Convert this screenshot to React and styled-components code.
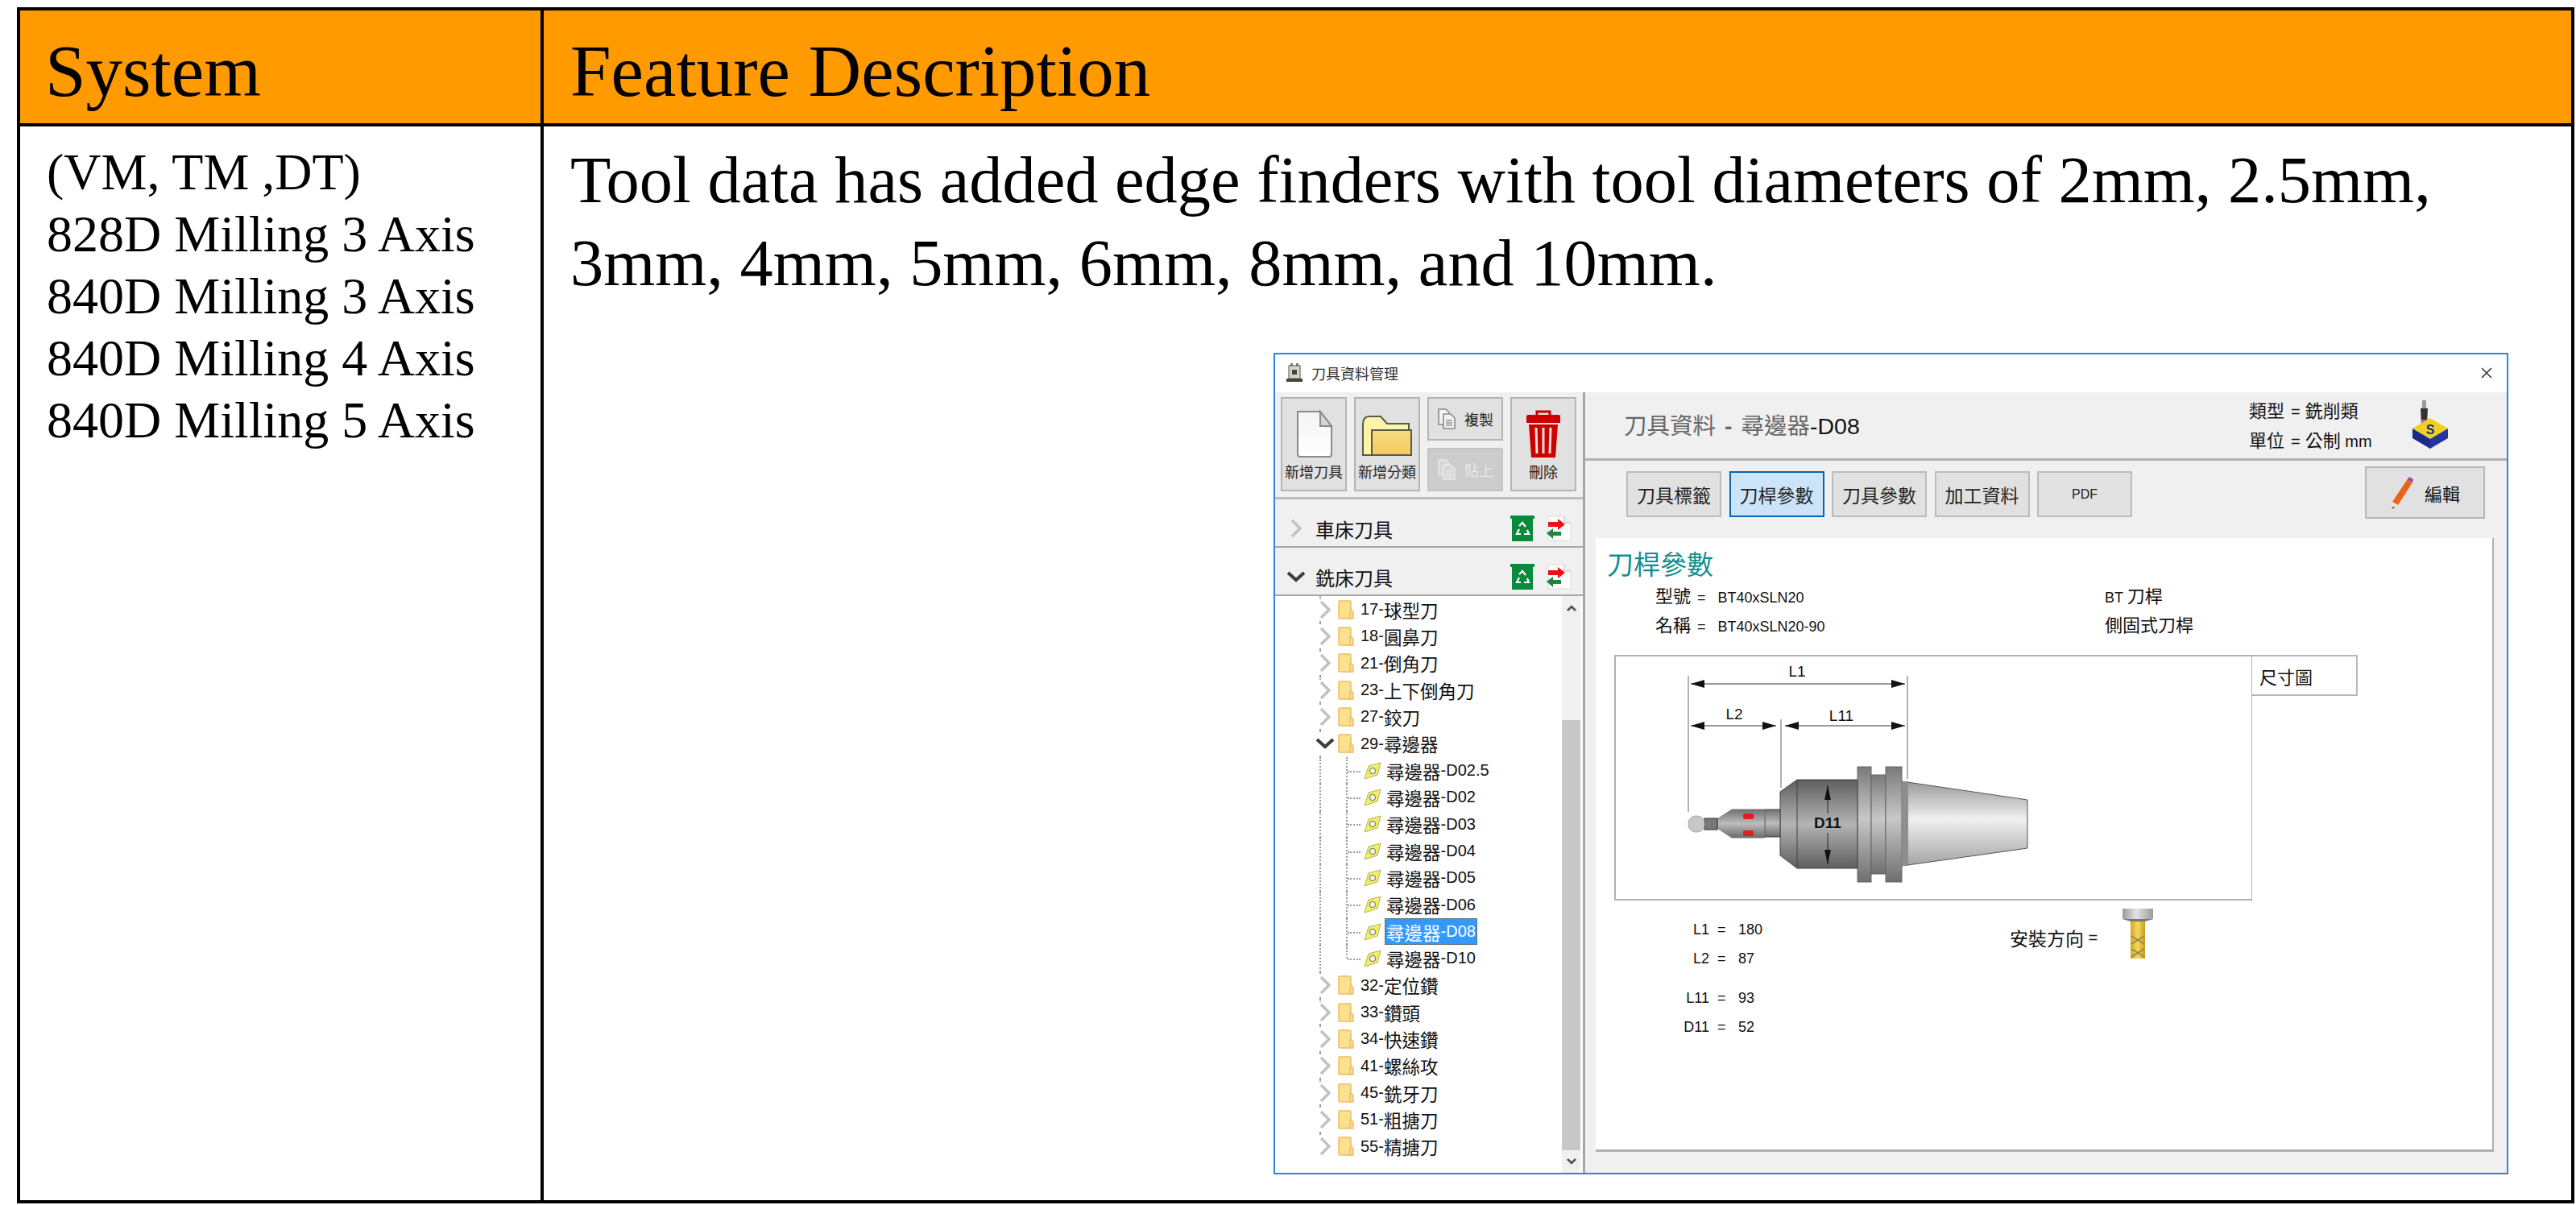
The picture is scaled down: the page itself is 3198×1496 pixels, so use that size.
import React from "react";
import styled, { createGlobalStyle } from "styled-components";

const Global = createGlobalStyle`
  html, body { margin: 0; padding: 0; background: #fff; }
  * { box-sizing: border-box; }
`;

const UI_FONT = `"Liberation Sans", "Noto Sans CJK TC", sans-serif`;
const CJK_FONT = `"Noto Sans CJK TC", sans-serif`;

const Sheet = styled.div`
  display: grid;
  grid-template-columns: 650px 1fr;
  grid-template-rows: 144px 1fr;
  width: 3175px;
  height: 1485px;
  margin: 9px 0 0 21px;
  border: 4px solid #000;
  font-family: "Liberation Serif", serif;
  color: #000;
`;
const HeadCell = styled.div`
  display: flex;
  align-items: center;
  background: #ff9a00;
  border-bottom: 4px solid #000;
  border-right: ${(p) => (p.$first ? "4px solid #000" : "none")};
  padding: 10px 0 0 ${(p) => (p.$first ? "31px" : "33px")};
  font-size: 91px;
  line-height: 1;
`;
const SystemCell = styled.div`
  border-right: 4px solid #000;
  padding: 18px 0 0 33px;
  font-size: 64px;
  line-height: 77px;
`;
const FeatureCell = styled.div`
  display: flex;
  flex-direction: column;
  padding: 15px 78px 32px 33px;
  min-height: 0;
`;
const FeatureText = styled.p`
  margin: 0;
  font-size: 82.4px;
  line-height: 103px;
`;

const Win = styled.div`
  display: flex;
  flex-direction: column;
  width: 1533px;
  height: 1020px;
  margin-top: auto;
  align-self: flex-end;
  border: 2px solid #2b88d8;
  background: #fff;
  font-family: ${UI_FONT};
  color: #111;
`;
const TitleBar = styled.div`
  display: flex;
  align-items: center;
  flex: none;
  height: 47px;
  padding: 0 17px 2px 14px;
  gap: 11px;
  font-family: ${CJK_FONT};
  font-size: 18px;
  color: #333;
`;
const CloseBox = styled.span`
  display: flex;
  margin-left: auto;
`;
const WinBody = styled.div`
  display: flex;
  flex: 1;
  min-height: 0;
`;
const LeftPane = styled.div`
  display: flex;
  flex-direction: column;
  flex: none;
  width: 385px;
  border-right: 3px solid #a6a6a6;
`;
const Toolbar = styled.div`
  display: grid;
  flex: none;
  grid-template-columns: 82px 82px 94px 82px;
  grid-template-rows: 54px 54px;
  gap: 9px;
  height: 133px;
  padding: 6px 7px 7px;
  background: #f0f0f0;
  border-bottom: 3px solid #bdbdbd;
`;
const ToolBtn = styled.div`
  display: flex;
  flex-direction: ${(p) => (p.$tall ? "column" : "row")};
  grid-row: ${(p) => (p.$tall ? "span 2" : "auto")};
  align-items: center;
  justify-content: ${(p) => (p.$tall ? "flex-end" : "center")};
  gap: ${(p) => (p.$tall ? "4px" : "10px")};
  padding-bottom: ${(p) => (p.$tall ? "11px" : "0")};
  background: ${(p) => (p.$off ? "#cccccc" : "#e1e1e1")};
  border: 2px solid ${(p) => (p.$off ? "#c4c4c4" : "#b4b4b4")};
  font-family: ${CJK_FONT};
  font-size: 18px;
  line-height: 24px;
  color: ${(p) => (p.$off ? "#e8e8e8" : "#222")};
  white-space: nowrap;
`;
const Section = styled.div`
  display: flex;
  align-items: center;
  flex: none;
  height: 60px;
  padding: 14px 14px 0 14px;
  background: #f0f0f0;
  border-bottom: 2px solid #a8a8a8;
  font-family: ${CJK_FONT};
  font-size: 24px;
`;
const SectionChevron = styled.span`
  display: flex;
  justify-content: center;
  width: 24px;
  margin: 0 12px 0 0;
`;
const SectionIcons = styled.span`
  display: flex;
  align-items: center;
  gap: 14px;
  margin-left: auto;
`;
const TreeWrap = styled.div`
  display: flex;
  flex: 1;
  min-height: 0;
  padding-right: 3px;
`;
const TreeList = styled.div`
  flex: 1;
`;
const Row = styled.div`
  position: relative;
  display: flex;
  align-items: center;
  height: 33.33px;
  padding-left: ${(p) => (p.$child ? "110px" : "49px")};
  font-size: 20px;
  white-space: nowrap;
  &::before {
    content: "";
    position: absolute;
    left: 55px;
    top: 0;
    bottom: ${(p) => (p.$end ? "50%" : "0")};
    border-left: 2px dotted #9a9a9a;
  }
`;
const ChildGuide = styled.span`
  position: absolute;
  left: 88px;
  top: 0;
  bottom: ${(p) => (p.$end ? "50%" : "0")};
  width: 18px;
  border-left: 2px dotted #9a9a9a;
  &::after {
    content: "";
    position: absolute;
    left: 0;
    top: ${(p) => (p.$end ? "100%" : "50%")};
    width: 16px;
    border-top: 2px dotted #9a9a9a;
  }
`;
const RowChevron = styled.span`
  position: relative;
  display: flex;
  justify-content: center;
  width: 26px;
  height: 26px;
  margin-right: 3px;
  background: #fff;
  align-items: center;
`;
const FolderBox = styled.span`
  display: flex;
  margin-right: 6px;
`;
const LeafBox = styled.span`
  position: relative;
  display: flex;
  margin-right: 4px;
`;
const Label = styled.span`
  display: inline-flex;
  align-items: center;
  height: 33px;
  padding: 0 1px;
  border: 1px ${(p) => (p.$sel ? "dotted #8a4b00" : "solid transparent")};
  background: ${(p) => (p.$sel ? "#3399ff" : "transparent")};
  color: ${(p) => (p.$sel ? "#fff" : "#111")};
`;
const Cjk = styled.span`
  font-family: ${CJK_FONT};
  font-size: ${(p) => p.$size || 22}px;
`;
const Scrollbar = styled.div`
  display: flex;
  flex-direction: column;
  flex: none;
  width: 23px;
  background: #f0f0f0;
`;
const ScrollArrow = styled.span`
  display: flex;
  align-items: center;
  justify-content: center;
  flex: none;
  height: 28px;
`;
const ScrollGap = styled.span`
  flex: none;
  height: 126px;
`;
const ScrollThumb = styled.span`
  flex: 1;
  background: #c8c8c8;
`;

const RightPane = styled.div`
  display: flex;
  flex-direction: column;
  flex: 1;
  min-width: 0;
  background: #f0f0f0;
`;
const HeaderBand = styled.div`
  display: flex;
  align-items: center;
  flex: none;
  height: 85px;
  padding: 0 70px 3px 48px;
  border-bottom: 3px solid #b0b0b0;
`;
const PageTitle = styled.div`
  font-family: ${CJK_FONT};
  font-size: 28.5px;
  color: #666;
  white-space: nowrap;
`;
const TitleSep = styled.span`
  margin: 0 11px;
  font-family: "Liberation Sans", sans-serif;
  font-weight: 700;
`;
const PageTitleStrong = styled.span`
  font-family: "Liberation Sans", sans-serif;
  color: #111;
`;
const UnitInfo = styled.div`
  display: grid;
  grid-auto-rows: 37px;
  align-items: center;
  margin-left: auto;
  margin-right: 48px;
  width: 152px;
  font-size: 20px;
  white-space: nowrap;
`;
const Eq = styled.span`
  margin: ${(p) => (p.$wide ? "0 15px 0 8px" : "0 6px 0 8px")};
`;
const TabBand = styled.div`
  display: flex;
  align-items: flex-start;
  flex: none;
  height: 96px;
  padding: 7px 27px 0 51px;
`;
const Tabs = styled.div`
  display: flex;
  gap: 9.5px;
  margin-top: 6px;
`;
const Tab = styled.div`
  display: flex;
  align-items: center;
  justify-content: center;
  width: 118px;
  height: 57px;
  background: ${(p) => (p.$active ? "#cce4f7" : "#e1e1e1")};
  border: 2px solid ${(p) => (p.$active ? "#0a64ad" : "#bcbcbc")};
  font-size: 16px;
  color: #222;
`;
const EditBtn = styled.div`
  display: flex;
  align-items: center;
  justify-content: center;
  gap: 13px;
  width: 149px;
  height: 65px;
  margin-left: auto;
  background: #e1e1e1;
  border: 2px solid #b8b8b8;
`;
const Content = styled.div`
  flex: 1;
  min-height: 0;
  margin: 0 16px 26px 13px;
  padding: 11px 0 0 14px;
  background: #fff;
  border-right: 2px solid #b0b0b0;
  border-bottom: 3px solid #b0b0b0;
`;
const SectionTitle = styled.div`
  height: 40px;
  font-family: ${CJK_FONT};
  font-size: 33px;
  line-height: 40px;
  color: #11908f;
`;
const InfoGrid = styled.div`
  display: grid;
  grid-template-columns: 558px 1fr;
  grid-auto-rows: 36px;
  align-items: center;
  margin-top: 1px;
  padding-left: 60px;
  font-size: 18px;
`;
const DiagramRow = styled.div`
  display: flex;
  align-items: flex-start;
  margin: 21px 0 0 9px;
`;
const DiagramBox = styled.div`
  display: flex;
  flex: none;
  width: 792px;
  height: 305px;
  border: 2px solid #b0b0b0;
  border-right-width: 1px;
  background: #fff;
`;
const DiagramTab = styled.div`
  display: flex;
  align-items: center;
  width: 131px;
  height: 51px;
  padding-left: 9px;
  border: 2px solid #b8b8b8;
  border-left: none;
  font-family: ${CJK_FONT};
  font-size: 22px;
`;
const BottomRow = styled.div`
  display: flex;
  align-items: flex-start;
  margin: 18px 0 0 73px;
`;
const Params = styled.div`
  display: grid;
  flex: none;
  grid-template-columns: 54px 36px 60px;
  grid-template-rows: 36px 36px 49px 36px;
  width: 150px;
  align-items: end;
  font-size: 18px;
  line-height: 36px;
`;
const ParamLabel = styled.span`
  text-align: right;
`;
const ParamEq = styled.span`
  padding-left: 10px;
`;
const Install = styled.div`
  display: flex;
  align-items: flex-start;
  margin: -8px 0 0 277px;
  font-size: 20px;
  white-space: nowrap;
`;
const InstallText = styled.span`
  display: flex;
  align-items: center;
  width: 140px;
  height: 30px;
  margin-top: 21px;
`;

/* ---------- icons ---------- */
const MachineIcon = () => (
  <svg width="20" height="24" viewBox="0 0 20 24">
    <rect x="5" y="0" width="3" height="3" fill="#777" />
    <rect x="12" y="0" width="3" height="3" fill="#777" />
    <rect x="3" y="3" width="14" height="16" fill="#d8d4c8" stroke="#555" />
    <rect x="7" y="8" width="6" height="6" fill="#444" />
    <rect x="0" y="19" width="20" height="4" fill="#444" />
  </svg>
);
const CloseIcon = () => (
  <svg width="16" height="16" viewBox="0 0 16 16">
    <path d="M2 2L14 14M14 2L2 14" stroke="#333" strokeWidth="1.6" />
  </svg>
);
const PageIcon = () => (
  <svg width="48" height="60" viewBox="0 0 48 60">
    <defs>
      <linearGradient id="pg" x1="0" y1="0" x2="0" y2="1">
        <stop offset="0" stopColor="#f4f4f4" />
        <stop offset="1" stopColor="#fff" />
      </linearGradient>
    </defs>
    <path d="M4 2H32L46 20V55Q46 58 43 58H7Q4 58 4 55Z" fill="url(#pg)" stroke="#8a8a8a" strokeWidth="2" />
    <path d="M32 2V20H46Z" fill="#d6d6d6" stroke="#8a8a8a" strokeWidth="2" />
  </svg>
);
const BigFolderIcon = () => (
  <svg width="64" height="54" viewBox="0 0 64 54">
    <defs>
      <linearGradient id="bf" x1="0" y1="0" x2="0" y2="1">
        <stop offset="0" stopColor="#f9dc82" />
        <stop offset="1" stopColor="#f4c862" />
      </linearGradient>
    </defs>
    <path d="M2 50V12Q2 2 10 2H24L32 11H59V20H14V50Z" fill="#fdf4a8" stroke="#5a5a4a" strokeWidth="2" />
    <path d="M13 19H62V50H13Z" fill="url(#bf)" stroke="#5a5a4a" strokeWidth="2" />
  </svg>
);
const CopyIcon = ({ off }) => {
  const s = off ? "#e8e8e8" : "#8a8a8a";
  const f = off ? "#d8d8d8" : "#f4f4f4";
  return (
    <svg width="24" height="26" viewBox="0 0 24 26">
      <path d="M2 1H11L15 5V20H2Z" fill={f} stroke={s} strokeWidth="1.6" />
      <path d="M8 7H17L22 12V25H8Z" fill={f} stroke={s} strokeWidth="1.6" />
      <path d="M11 15H19M11 18H19M11 21H19" stroke={s} strokeWidth="1.4" />
    </svg>
  );
};
const TrashIcon = () => (
  <svg width="44" height="60" viewBox="0 0 44 60">
    <path d="M14 7V2H30V7" fill="none" stroke="#c00" strokeWidth="3" />
    <path d="M1 8Q1 6 3 6H41Q43 6 43 8V16H1Z" fill="#cc0000" />
    <path d="M4 18H40L37 59H7Z" fill="#cc0000" />
    <path d="M13 22L14 54M22 22V54M31 22L30 54" stroke="#f3dede" strokeWidth="3" />
  </svg>
);
const BinIcon = () => (
  <svg width="30" height="32" viewBox="0 0 30 32">
    <rect x="0" y="0" width="30" height="4" fill="#0a8a3c" />
    <rect x="2" y="3" width="26" height="29" fill="#0a8a3c" />
    <path d="M11 13L15 9L19 14M21 18L23 23H17M13 23H8L11 17" fill="none" stroke="#fff" strokeWidth="2.2" />
  </svg>
);
const SwapIcon = () => (
  <svg width="32" height="32" viewBox="0 0 32 32">
    <path d="M3 1H23L31 9V31H3Z" fill="#fff" stroke="#d8d8d8" />
    <path d="M23 1V9H31" fill="#eee" stroke="#bbb" />
    <path d="M3 8H15V4L24 11L15 18V14H3Z" fill="#ee1111" />
    <path d="M19 16V20H9V16L1 22L9 29V25H19Z" fill="#1a8a3a" />
  </svg>
);
const Chevron = ({ open }) =>
  open ? (
    <svg width="24" height="14" viewBox="0 0 24 14">
      <path d="M2 2L12 11L22 2" fill="none" stroke="#3c3c3c" strokeWidth="4" />
    </svg>
  ) : (
    <svg width="14" height="24" viewBox="0 0 14 24">
      <path d="M2 2L12 12L2 22" fill="none" stroke="#c2c2c2" strokeWidth="3.6" />
    </svg>
  );
const SmallFolder = () => (
  <svg width="20" height="24" viewBox="0 0 20 24">
    <path d="M1 2Q1 1 2 1H15Q16 1 16 2V23H2Q1 23 1 22Z" fill="#fbe08e" stroke="#eebc6a" strokeWidth="1.5" />
    <path d="M16 12L19 15V23H15V15Z" fill="#fbe08e" stroke="#eebc6a" strokeWidth="1.5" />
  </svg>
);
const Insert = () => (
  <svg width="22" height="22" viewBox="0 0 22 22">
    <path d="M6 5L21 1L17 16L1 21Z" fill="#f2f060" stroke="#b0b070" strokeWidth="1" />
    <circle cx="11" cy="11" r="3.6" fill="#f4f4e8" stroke="#8a8a6a" strokeWidth="1.4" />
  </svg>
);
const ProbeIcon = () => (
  <svg width="50" height="60" viewBox="0 0 50 60">
    <rect x="15" y="0" width="5" height="10" fill="#999" />
    <path d="M13 10H22L21 30H14Z" fill="#333" />
    <rect x="14" y="24" width="7" height="4" fill="#c060a0" />
    <rect x="15" y="28" width="5" height="16" fill="#f0e060" />
    <path d="M25 22L47 35L25 48L3 35Z" fill="#f0d020" />
    <path d="M3 35L25 48V60L3 47Z" fill="#1a2a8c" />
    <path d="M47 35L25 48V60L47 47Z" fill="#24369c" />
    <text x="25" y="42" textAnchor="middle" fontSize="16" fontWeight="700" fontFamily="Liberation Sans, sans-serif" fill="#1a2a8c">S</text>
  </svg>
);
const PencilIcon = () => (
  <svg width="30" height="42" viewBox="0 0 30 42">
    <path d="M21 5L28 8L10 36L3 32Z" fill="#e8641a" />
    <path d="M21 5L24 1L29 4L28 8Z" fill="#9a4aa0" />
    <path d="M3 32L10 36L2 41Z" fill="#f6e2c4" />
    <path d="M2 41L4 38L6 39Z" fill="#222" />
  </svg>
);
const DrillIcon = () => (
  <svg width="38" height="62" viewBox="0 0 38 62">
    <defs>
      <linearGradient id="sh" x1="0" y1="0" x2="1" y2="0">
        <stop offset="0" stopColor="#999" />
        <stop offset="0.45" stopColor="#e4e4e4" />
        <stop offset="1" stopColor="#9a9a9a" />
      </linearGradient>
      <linearGradient id="fl" x1="0" y1="0" x2="1" y2="0">
        <stop offset="0" stopColor="#d4a820" />
        <stop offset="0.5" stopColor="#f4d860" />
        <stop offset="1" stopColor="#c89c18" />
      </linearGradient>
    </defs>
    <rect x="0" y="0" width="38" height="13" fill="url(#sh)" />
    <path d="M0 13H38L28 16H10Z" fill="#777" />
    <rect x="10" y="16" width="18" height="46" fill="url(#fl)" />
    <path d="M11 34L27 44M11 44L27 34M11 50L27 60M11 60L27 50" stroke="#9a8a50" strokeWidth="2" />
  </svg>
);
const ArrowDown = () => (
  <svg width="14" height="9" viewBox="0 0 14 9">
    <path d="M2 1L7 6L12 1" fill="none" stroke="#505050" strokeWidth="2.6" />
  </svg>
);
const ArrowUp = () => (
  <svg width="14" height="9" viewBox="0 0 14 9">
    <path d="M2 8L7 3L12 8" fill="none" stroke="#505050" strokeWidth="2.6" />
  </svg>
);

const Arrow = ({ x1, x2, y }) => (
  <g>
    <path d={`M${x1} ${y}H${x2}`} stroke="#333" strokeWidth="1" />
    <path d={`M${x1} ${y}l17 -5v10z`} fill="#111" />
    <path d={`M${x2} ${y}l-17 -5v10z`} fill="#111" />
  </g>
);

const ToolDrawing = () => (
  <svg width="789" height="301" viewBox="2006 815 789 301" fontFamily="Liberation Sans, sans-serif">
    <defs>
      <linearGradient id="hold" x1="0" y1="0" x2="0" y2="1">
        <stop offset="0" stopColor="#5e5e5e" />
        <stop offset="0.5" stopColor="#b4b4b4" />
        <stop offset="1" stopColor="#5e5e5e" />
      </linearGradient>
      <linearGradient id="flange" x1="0" y1="0" x2="0" y2="1">
        <stop offset="0" stopColor="#7a7a7a" />
        <stop offset="0.45" stopColor="#c8c8c8" />
        <stop offset="1" stopColor="#6e6e6e" />
      </linearGradient>
      <linearGradient id="taper" x1="0" y1="0" x2="0" y2="1">
        <stop offset="0" stopColor="#9a9a9a" />
        <stop offset="0.45" stopColor="#f0f0f0" />
        <stop offset="1" stopColor="#a4a4a4" />
      </linearGradient>
      <linearGradient id="nose" x1="0" y1="0" x2="0" y2="1">
        <stop offset="0" stopColor="#707070" />
        <stop offset="0.5" stopColor="#bcbcbc" />
        <stop offset="1" stopColor="#6a6a6a" />
      </linearGradient>
    </defs>
    <path d="M2096 839V1008M2368 839V967M2211 893V978" stroke="#666" strokeWidth="1" />
    <Arrow x1={2099} x2={2365} y={849} />
    <Arrow x1={2099} x2={2205} y={901} />
    <Arrow x1={2216} x2={2365} y={901} />
    <text x="2231" y="840" textAnchor="middle" fontSize="19" fill="#111">L1</text>
    <text x="2153" y="893" textAnchor="middle" fontSize="19" fill="#111">L2</text>
    <text x="2286" y="895" textAnchor="middle" fontSize="19" fill="#111">L11</text>

    <path d="M2361 970L2517 993V1053L2361 1075Z" fill="url(#taper)" stroke="#555" strokeWidth="1" />
    <rect x="2306" y="952" width="17" height="143" fill="url(#flange)" stroke="#666" />
    <rect x="2323" y="962" width="18" height="123" fill="url(#flange)" stroke="#666" />
    <rect x="2341" y="952" width="20" height="143" fill="url(#flange)" stroke="#666" />
    <path d="M2361 970H2369V1075H2361Z" fill="#8e8e8e" />
    <path d="M2210 983L2231 968H2306V1078H2231L2210 1062Z" fill="url(#hold)" stroke="#444" />
    <path d="M2231 968V1078" stroke="#444" />
    <path d="M2191 1005H2210V1039H2191Z" fill="url(#nose)" stroke="#444" />
    <path d="M2132 1017L2150 1005H2191V1040H2150L2132 1028Z" fill="url(#nose)" stroke="#777" />
    <rect x="2116" y="1016" width="16" height="14" fill="#777" stroke="#333" />
    <rect x="2096" y="1013" width="20" height="20" rx="9" fill="#c8c8c8" stroke="#aaa" />
    <rect x="2164" y="1010" width="13" height="7" rx="2" fill="#e01e1e" />
    <rect x="2164" y="1031" width="13" height="7" rx="2" fill="#e01e1e" />
    <path d="M2269 975V1010M2269 1034V1073" stroke="#222" strokeWidth="1" />
    <path d="M2269 975l-4 18h8z" fill="#111" />
    <path d="M2269 1073l-4 -18h8z" fill="#111" />
    <text x="2269" y="1028" textAnchor="middle" fontSize="19" fontWeight="700" fill="#111">D11</text>
  </svg>
);

/* ---------- data ---------- */
const topBefore = [
  ["17-", "球型刀"],
  ["18-", "圓鼻刀"],
  ["21-", "倒角刀"],
  ["23-", "上下倒角刀"],
  ["27-", "鉸刀"],
];
const children = ["D02.5", "D02", "D03", "D04", "D05", "D06", "D08", "D10"];
const topAfter = [
  ["32-", "定位鑽"],
  ["33-", "鑽頭"],
  ["34-", "快速鑽"],
  ["41-", "螺絲攻"],
  ["45-", "銑牙刀"],
  ["51-", "粗搪刀"],
  ["55-", "精搪刀"],
];
const tabs = ["刀具標籤", "刀桿參數", "刀具參數", "加工資料"];
const params = [
  ["L1", "180"],
  ["L2", "87"],
  ["L11", "93"],
  ["D11", "52"],
];

const TopRow = ({ code, name, open, end }) => (
  <Row $end={end}>
    <RowChevron>
      <Chevron open={open} />
    </RowChevron>
    <FolderBox>
      <SmallFolder />
    </FolderBox>
    <Label>
      {code}
      <Cjk $size={22.5}>{name}</Cjk>
    </Label>
  </Row>
);

export default function App() {
  return (
    <>
      <Global />
      <Sheet>
        <HeadCell $first>System</HeadCell>
        <HeadCell>Feature Description</HeadCell>
        <SystemCell>
          (VM, TM ,DT)
          <br />
          828D Milling 3 Axis
          <br />
          840D Milling 3 Axis
          <br />
          840D Milling 4 Axis
          <br />
          840D Milling 5 Axis
        </SystemCell>
        <FeatureCell>
          <FeatureText>
            Tool data has added edge finders with tool diameters of 2mm, 2.5mm, 3mm, 4mm, 5mm, 6mm, 8mm, and 10mm.
          </FeatureText>
          <Win>
            <TitleBar>
              <MachineIcon />
              刀具資料管理
              <CloseBox>
                <CloseIcon />
              </CloseBox>
            </TitleBar>
            <WinBody>
              <LeftPane>
                <Toolbar>
                  <ToolBtn $tall>
                    <PageIcon />
                    新增刀具
                  </ToolBtn>
                  <ToolBtn $tall>
                    <BigFolderIcon />
                    新增分類
                  </ToolBtn>
                  <ToolBtn>
                    <CopyIcon />
                    複製
                  </ToolBtn>
                  <ToolBtn $tall>
                    <TrashIcon />
                    刪除
                  </ToolBtn>
                  <ToolBtn $off>
                    <CopyIcon off />
                    貼上
                  </ToolBtn>
                </Toolbar>
                <Section>
                  <SectionChevron>
                    <Chevron />
                  </SectionChevron>
                  車床刀具
                  <SectionIcons>
                    <BinIcon />
                    <SwapIcon />
                  </SectionIcons>
                </Section>
                <Section>
                  <SectionChevron>
                    <Chevron open />
                  </SectionChevron>
                  銑床刀具
                  <SectionIcons>
                    <BinIcon />
                    <SwapIcon />
                  </SectionIcons>
                </Section>
                <TreeWrap>
                  <TreeList>
                    {topBefore.map(([c, n]) => (
                      <TopRow key={c} code={c} name={n} />
                    ))}
                    <TopRow code="29-" name="尋邊器" open />
                    {children.map((c, i) => (
                      <Row key={c} $child>
                        <ChildGuide $end={i === children.length - 1} />
                        <LeafBox>
                          <Insert />
                        </LeafBox>
                        <Label $sel={c === "D08"}>
                          <Cjk $size={22.5}>尋邊器</Cjk>-{c}
                        </Label>
                      </Row>
                    ))}
                    {topAfter.map(([c, n], i) => (
                      <TopRow key={c} code={c} name={n} end={i === topAfter.length - 1} />
                    ))}
                  </TreeList>
                  <Scrollbar>
                    <ScrollArrow>
                      <ArrowUp />
                    </ScrollArrow>
                    <ScrollGap />
                    <ScrollThumb />
                    <ScrollArrow>
                      <ArrowDown />
                    </ScrollArrow>
                  </Scrollbar>
                </TreeWrap>
              </LeftPane>
              <RightPane>
                <HeaderBand>
                  <PageTitle>
                    刀具資料<TitleSep>-</TitleSep>尋邊器<PageTitleStrong>-D08</PageTitleStrong>
                  </PageTitle>
                  <UnitInfo>
                    <span>
                      <Cjk>類型</Cjk>
                      <Eq>=</Eq>
                      <Cjk>銑削類</Cjk>
                    </span>
                    <span>
                      <Cjk>單位</Cjk>
                      <Eq>=</Eq>
                      <Cjk>公制</Cjk> mm
                    </span>
                  </UnitInfo>
                  <ProbeIcon />
                </HeaderBand>
                <TabBand>
                  <Tabs>
                    {tabs.map((t, i) => (
                      <Tab key={t} $active={i === 1}>
                        <Cjk $size={23}>{t}</Cjk>
                      </Tab>
                    ))}
                    <Tab>PDF</Tab>
                  </Tabs>
                  <EditBtn>
                    <PencilIcon />
                    <Cjk>編輯</Cjk>
                  </EditBtn>
                </TabBand>
                <Content>
                  <SectionTitle>刀桿參數</SectionTitle>
                  <InfoGrid>
                    <span>
                      <Cjk>型號</Cjk>
                      <Eq $wide>=</Eq>BT40xSLN20
                    </span>
                    <span>
                      BT <Cjk>刀桿</Cjk>
                    </span>
                    <span>
                      <Cjk>名稱</Cjk>
                      <Eq $wide>=</Eq>BT40xSLN20-90
                    </span>
                    <span>
                      <Cjk>側固式刀桿</Cjk>
                    </span>
                  </InfoGrid>
                  <DiagramRow>
                    <DiagramBox>
                      <ToolDrawing />
                    </DiagramBox>
                    <DiagramTab>尺寸圖</DiagramTab>
                  </DiagramRow>
                  <BottomRow>
                    <Params>
                      {params.map(([k, v]) => (
                        <React.Fragment key={k}>
                          <ParamLabel>{k}</ParamLabel>
                          <ParamEq>=</ParamEq>
                          <span>{v}</span>
                        </React.Fragment>
                      ))}
                    </Params>
                    <Install>
                      <InstallText>
                        <Cjk $size={23}>安裝方向</Cjk>&nbsp;=
                      </InstallText>
                      <DrillIcon />
                    </Install>
                  </BottomRow>
                </Content>
              </RightPane>
            </WinBody>
          </Win>
        </FeatureCell>
      </Sheet>
    </>
  );
}
